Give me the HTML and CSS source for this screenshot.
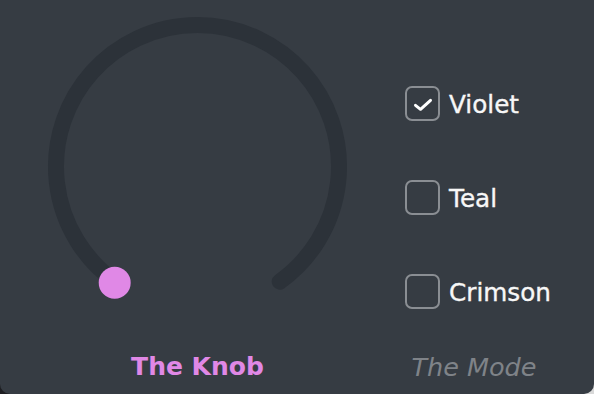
FILE: index.html
```html
<!DOCTYPE html>
<html>
<head>
<meta charset="utf-8">
<link rel="stylesheet" href="styles.css">
</head>
<body>
<div class="app">
  <section class="col knob-col">
    <div class="stage">
      <svg class="knob" width="395" height="330" viewBox="0 0 395 330">
        <path d="M 115.3 281.7 A 141.5 141.5 0 1 1 279.7 281.7" fill="none" stroke="#2c3239" stroke-width="16" stroke-linecap="round"/>
        <circle cx="114.7" cy="282.7" r="16" fill="#e088e6"/>
      </svg>
    </div>
    <div class="label active">The Knob</div>
  </section>
  <section class="col mode-col">
    <div class="stage">
      <ul class="options">
        <li class="option">
          <span class="box checked">
            <svg width="31" height="31" viewBox="0 0 31 31"><path d="M8.5 17.3 L13.5 21.3 L23.5 12.3" fill="none" stroke="#fff" stroke-width="3" stroke-linecap="round" stroke-linejoin="round"/></svg>
          </span>
          <span class="text">Violet</span>
        </li>
        <li class="option">
          <span class="box"></span>
          <span class="text">Teal</span>
        </li>
        <li class="option">
          <span class="box"></span>
          <span class="text">Crimson</span>
        </li>
      </ul>
    </div>
    <div class="label muted">The Mode</div>
  </section>
</div>
</body>
</html>
```
FILE: styles.css
```css
html, body {
  margin: 0;
  padding: 0;
}
body {
  width: 594px;
  height: 394px;
  background: linear-gradient(90deg, #1d1e21 50%, #d9d9d9 50%);
  overflow: hidden;
}
.app {
  width: 594px;
  height: 394px;
  background: #363c43;
  border-radius: 0 0 10px 10px;
  display: flex;
  font-family: "DejaVu Sans", sans-serif;
}
.col {
  display: flex;
  flex-direction: column;
  align-items: center;
}
.knob-col {
  width: 395px;
}
.mode-col {
  width: 158px;
}
.stage {
  height: 350px;
  width: 100%;
}
.knob {
  display: block;
}
.options {
  list-style: none;
  margin: 0;
  padding: 86px 0 0 10px;
  display: flex;
  flex-direction: column;
  gap: 59px;
}
.option {
  display: flex;
  align-items: center;
  gap: 9px;
  height: 35px;
}
.box {
  width: 31px;
  height: 31px;
  border: 2px solid #8a8e93;
  border-radius: 7px;
  flex: none;
}
.box svg {
  display: block;
}
.text {
  color: #f7f7f7;
  font-size: 24.7px;
  line-height: 35px;
  padding-top: 1px;
  -webkit-text-stroke: 0.35px #f7f7f7;
}
.label {
  font-size: 25.5px;
  line-height: 34px;
  white-space: nowrap;
}
.active {
  color: #e088e6;
  font-weight: bold;
  font-size: 25px;
}
.muted {
  color: #7f8388;
  font-style: italic;
}
```
